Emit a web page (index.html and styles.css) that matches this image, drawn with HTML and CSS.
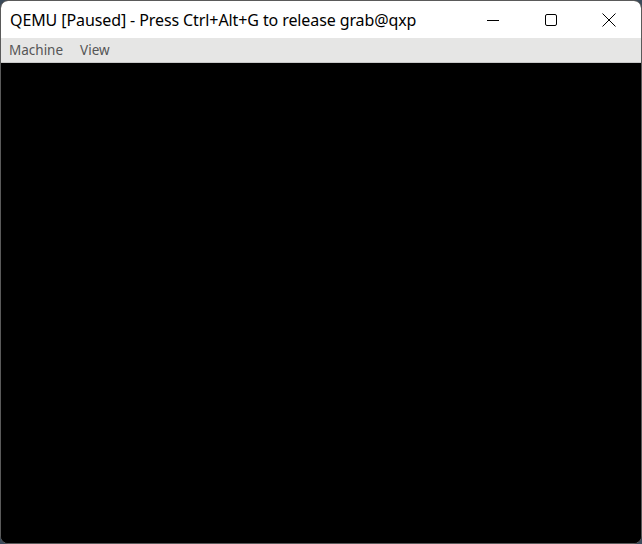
FILE: index.html
```html
<!DOCTYPE html>
<html>
<head>
<meta charset="utf-8">
<link rel="stylesheet" href="styles.css">
</head>
<body>
<div class="window">
  <div class="titlebar">
    <div class="title">QEMU [Paused] - Press Ctrl+Alt+G to release grab@qxp</div>
    <div class="controls">
      <div class="ctl">
        <svg width="14" height="14" viewBox="0 0 14 14"><path d="M1 7.5H13" stroke="#000" stroke-width="1"/></svg>
      </div>
      <div class="ctl">
        <svg width="14" height="14" viewBox="0 0 14 14"><rect x="1.5" y="1.5" width="11" height="11" rx="1.5" fill="none" stroke="#000" stroke-width="1"/></svg>
      </div>
      <div class="ctl">
        <svg width="14" height="14" viewBox="0 0 14 14"><path d="M0.5 0.5L13.5 13.5M13.5 0.5L0.5 13.5" stroke="#000" stroke-width="1"/></svg>
      </div>
    </div>
  </div>
  <div class="menubar">
    <span class="menu">Machine</span>
    <span class="menu">View</span>
  </div>
  <div class="screen"></div>
</div>
</body>
</html>
```
FILE: styles.css
```css
html, body {
  margin: 0;
  padding: 0;
  background: #3a4a5a;
  width: 642px;
  height: 544px;
  overflow: hidden;
}
.window {
  box-sizing: border-box;
  width: 642px;
  height: 544px;
  border: 1px solid #5a5a5a;
  border-radius: 8px;
  overflow: hidden;
  display: flex;
  flex-direction: column;
  background: #000;
}
.titlebar {
  height: 37px;
  background: #fff;
  display: flex;
  align-items: center;
  justify-content: space-between;
  flex-shrink: 0;
}
.title {
  font-family: "Noto Sans", sans-serif;
  font-size: 16px;
  color: #000;
  padding-left: 9px;
  letter-spacing: -0.1px;
}
.controls {
  display: flex;
  height: 100%;
  padding-right: 3px;
}
.ctl {
  width: 58px;
  display: flex;
  align-items: center;
  justify-content: center;
}
.menubar {
  height: 24px;
  background: #e6e6e5;
  border-bottom: 1px solid #c8c8c8;
  display: flex;
  align-items: center;
  flex-shrink: 0;
  padding-left: 8px;
  gap: 17px;
}
.menu {
  font-family: "Noto Sans", sans-serif;
  font-size: 13.5px;
  color: #555;
}
.screen {
  flex: 1;
  background: #000;
}
```
